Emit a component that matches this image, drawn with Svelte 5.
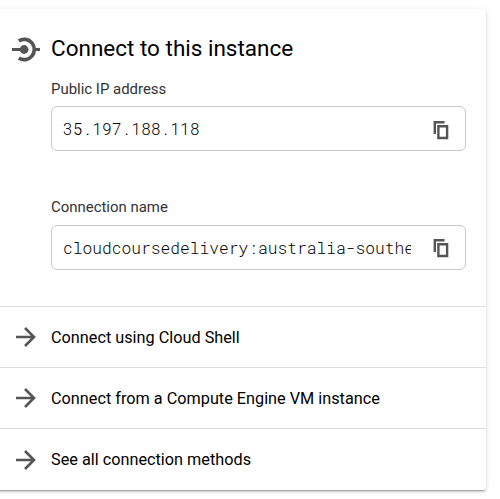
<script>
  const fields = [
    { label: 'Public IP address', value: '35.197.188.118' },
    { label: 'Connection name', value: 'cloudcoursedelivery:australia-southe' }
  ];
  const links = [
    'Connect using Cloud Shell',
    'Connect from a Compute Engine VM instance',
    'See all connection methods'
  ];
</script>

<div class="page">
  <section class="card">
    <header>
      <svg class="logo" width="28" height="26" viewBox="0 0 28 26" fill="none" stroke="#545454">
        <path d="M6.8 4.8A10.2 10.2 0 1 1 6.8 22.2" stroke-width="3.7" />
        <path d="M0 13.5H12M22 13.5H28" stroke-width="3.2" />
        <circle cx="12.1" cy="13.5" r="4.4" fill="#545454" stroke="none" />
      </svg>
      <h1>Connect to this instance</h1>
    </header>

    <div class="fields">
      {#each fields as field}
        <div class="field">
          <div class="label">{field.label}</div>
          <div class="box">
            <span class="value">{field.value}</span>
            <svg class="copy" width="16" height="19" viewBox="0 0 16 19" fill="none" stroke="#555" stroke-width="2.4">
              <path d="M1.8 13V1.2H11.5" />
              <path d="M5.4 5.2H14.1V17H5.4Z" />
            </svg>
          </div>
        </div>
      {/each}
    </div>

    <nav>
      {#each links as link}
        <div class="row">
          <svg width="20" height="20" viewBox="0 0 20 20" fill="none" stroke="#555" stroke-width="2.6">
            <path d="M0 10H18M9 1L18 10L9 19" />
          </svg>
          <span>{link}</span>
        </div>
      {/each}
    </nav>
  </section>
</div>

<style>
  :global(body) {
    background: #fff;
  }
  .page {
    box-sizing: border-box;
    width: 500px;
    height: 499px;
    padding-top: 9px;
    overflow: hidden;
    font-family: Roboto, sans-serif;
    color: #000;
  }
  .card {
    box-sizing: border-box;
    width: 496px;
    height: 481px;
    margin-left: -10px;
    padding-left: 10px;
    border-radius: 3px;
    background: #fff;
    box-shadow: 0 3px 1px -2px rgba(0, 0, 0, 0.2), 0 2px 2px 0 rgba(0, 0, 0, 0.14),
      0 1px 5px 0 rgba(0, 0, 0, 0.12);
  }
  header {
    display: flex;
    align-items: center;
    height: 70px;
    padding-left: 12px;
    gap: 11px;
  }
  .logo {
    margin-top: 9px;
  }
  h1 {
    margin: 7px 0 0;
    font-size: 22.5px;
    font-weight: 400;
    line-height: 28px;
    white-space: nowrap;
  }
  .fields {
    box-sizing: border-box;
    height: 227px;
    padding: 0 20px 0 51px;
  }
  .field {
    height: 118px;
  }
  .label {
    height: 27px;
    line-height: 20px;
    font-size: 14.95px;
    color: #333;
  }
  .field + .field .label {
    height: 28px;
  }
  .box {
    box-sizing: border-box;
    display: flex;
    align-items: center;
    justify-content: space-between;
    height: 45px;
    padding: 0 16px 0 11px;
    border: 1px solid #c8c8c8;
    border-radius: 6px;
  }
  .value {
    width: 348px;
    overflow: hidden;
    white-space: nowrap;
    font-family: 'Roboto Mono', 'DejaVu Sans Mono', monospace;
    font-size: 16.25px;
    font-weight: 350;
    line-height: 24px;
  }
  .copy {
    flex: none;
    margin-top: 3px;
  }
  .field + .field .copy {
    margin-top: 1px;
  }
  .row {
    box-sizing: border-box;
    display: flex;
    align-items: center;
    height: 61px;
    padding-left: 16px;
    gap: 15px;
    border-top: 1px solid #dcdcdc;
    font-size: 16.25px;
  }
  .row:last-child {
    height: 62px;
  }
</style>
